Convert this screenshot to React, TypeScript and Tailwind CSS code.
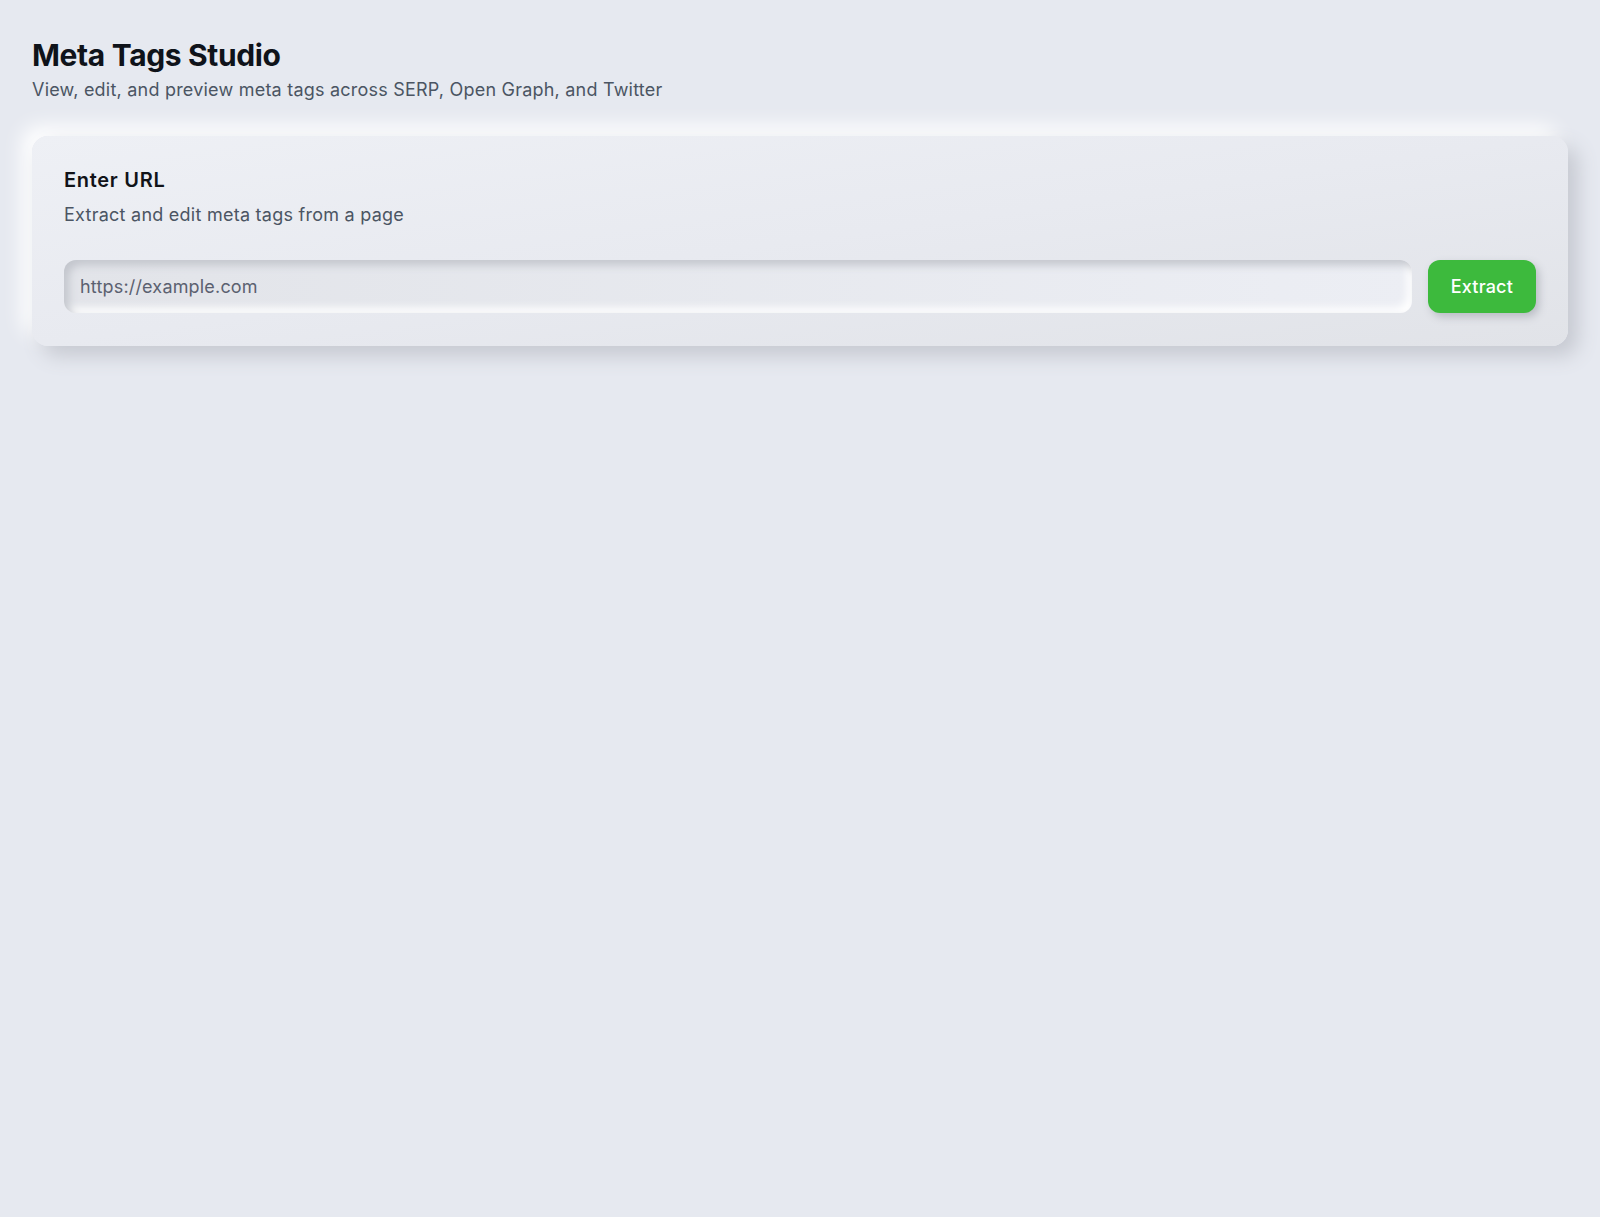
const App = () => {
  return (
    <div
      className="min-h-screen bg-[#e6e9f0] text-gray-900"
      style={{ fontFamily: 'Inter, "Noto Sans", sans-serif' }}
    >
      <div className="px-8 pt-[37px] pb-8">
        {/* Header */}
        <h1 className="text-3xl font-bold tracking-[-0.012em] text-[#0f131a]">Meta Tags Studio</h1>
        <p className="mt-[3px] text-lg tracking-[0.012em] text-[#4b5563]">
          View, edit, and preview meta tags across SERP, Open Graph, and Twitter
        </p>

        {/* URL card */}
        <div className="mt-8 rounded-2xl bg-gradient-to-br from-[#eef0f5] via-[#e8eaf0] to-[#e1e3e8] px-8 pt-[30px] pb-[33px] shadow-[10px_10px_20px_#c6c9d1,-10px_-10px_20px_#ffffff]">
          <h2 className="text-xl font-semibold tracking-[0.035em] text-[#111318]">Enter URL</h2>
          <p className="mt-[7px] text-lg tracking-[0.014em] text-[#4b5563]">Extract and edit meta tags from a page</p>

          <div className="mt-[31px] flex items-center gap-4">
            <input
              type="text"
              placeholder="https://example.com"
              className="h-[53px] flex-1 rounded-xl bg-gradient-to-r from-[#e2e4e9] to-[#eceef4] px-4 text-lg tracking-[0.01em] text-gray-800 placeholder:text-[#5b6170] outline-none shadow-[inset_5px_5px_8px_#c3c6cd,inset_-5px_-5px_8px_#ffffff]"
            />
            <button className="h-[53px] rounded-xl bg-[#3dba3d] px-[23px] text-lg font-medium tracking-[0.01em] text-white shadow-[3px_4px_8px_#b9bcc4]">
              Extract
            </button>
          </div>
        </div>
      </div>
    </div>
  );
};

export default App;
